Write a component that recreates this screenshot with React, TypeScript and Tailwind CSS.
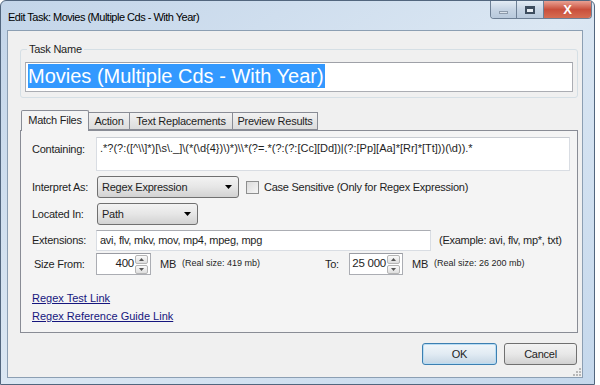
import React from "react";

// small building blocks for the win7 look
const Combo = ({ value, width }: { value: string; width: string }) => (
  <div
    className={`${width} h-[22px] flex items-center rounded-[3px] border border-[#707070] bg-gradient-to-b from-[#f3f3f3] via-[#e6e6e6] to-[#d2d2d2] pl-[4px] pr-[6px]`}
  >
    <span className="flex-1">{value}</span>
    <svg width="7" height="4" viewBox="0 0 7 4">
      <path d="M0 0h7L3.5 4z" fill="#000" />
    </svg>
  </div>
);

const Spin = ({ value, width }: { value: string; width: string }) => (
  <div
    className={`${width} h-[22px] flex items-center border border-[#abadb3] border-t-[#9a9ca3] bg-white pr-[2px]`}
  >
    <span className="flex-1 text-right pr-[1px] text-[11.5px] whitespace-nowrap">{value}</span>
    <div className="flex flex-col gap-[1px]">
      <div className="w-[13px] h-[9px] flex items-center justify-center border border-[#b5b5b5] rounded-[2px] bg-gradient-to-b from-[#fafafa] to-[#dedede]">
        <svg width="5" height="3" viewBox="0 0 5 3">
          <path d="M0 3h5L2.5 0z" fill="#555" />
        </svg>
      </div>
      <div className="w-[13px] h-[9px] flex items-center justify-center border border-[#b5b5b5] rounded-[2px] bg-gradient-to-b from-[#fafafa] to-[#dedede]">
        <svg width="5" height="3" viewBox="0 0 5 3">
          <path d="M0 0h5L2.5 3z" fill="#555" />
        </svg>
      </div>
    </div>
  </div>
);

export default function App() {
  return (
    <div className="w-[600px] h-[385px] bg-white overflow-hidden font-['Liberation_Sans',Arial,sans-serif] text-[11px] tracking-[-0.25px] text-[#1e1e1e]">
      <div className="w-[595px] h-[385px] flex flex-col rounded-t-[6px] border border-[#52667e] bg-gradient-to-br from-[#c3d5e9] via-[#dbe7f3] to-[#c5d8ec]">
        {/* title bar */}
        <div className="h-[29px] flex items-start shrink-0">
          <span className="ml-[7px] mt-[8px] text-[11px] tracking-[-0.5px] text-black">
            Edit Task: Movies (Multiple Cds - With Year)
          </span>
          <div className="ml-auto mr-[2px] flex h-[18px] rounded-b-[4px] border border-t-0 border-[#6d7f95] overflow-hidden">
            <div className="w-[26px] flex items-center justify-center border-r border-[#6d7f95] bg-gradient-to-b from-[#e3ebf4] via-[#c6d4e4] to-[#b8c9dc]">
              <div className="w-[9px] h-[3px] mt-[5px] bg-[#dbe3ec] border border-[#8d9bac]" />
            </div>
            <div className="w-[27px] flex items-center justify-center border-r border-[#6d7f95] bg-gradient-to-b from-[#e3ebf4] via-[#c6d4e4] to-[#b8c9dc]">
              <div className="w-[10px] h-[8px] border-2 border-t-[3px] border-[#3d4c5e] bg-[#e9eef4]" />
            </div>
            <div className="w-[47px] flex items-center justify-center bg-gradient-to-b from-[#e8a093] via-[#c94f3c] to-[#d66d52]">
              <span className="text-white font-bold text-[13px] leading-none">X</span>
            </div>
          </div>
        </div>

        {/* client area */}
        <div className="relative ml-[6px] w-[576px] h-[348px] shrink-0 border border-[#8c9fb3] bg-[#f0f0f0] flex flex-col">
          <fieldset className="ml-[12px] mt-[11px] w-[558px] border border-[#d5dfe5] rounded-[3px] px-[4px] pb-[5px]">
            <legend className="ml-[2px] px-[2px] leading-[14px] text-[11px]">Task Name</legend>
            <div className="mt-[6px] h-[30px] border border-[#abadb3] border-t-[#9fa1a8] bg-white p-[1px] pl-[2px]">
              <span className="inline-block h-[24px] leading-[24px] bg-[#3399ff] text-white text-[20px] tracking-normal pr-[1px]">
                Movies (Multiple Cds - With Year)
              </span>
            </div>
          </fieldset>

          {/* tabs */}
          <div className="mt-[12px] ml-[12px] w-[558px] flex flex-col">
            <div className="h-[20px] flex items-end pl-[1px] relative z-10">
              <div className="w-[68px] h-[21px] -mb-[1px] flex items-center justify-center border border-b-0 border-[#898c95] rounded-t-[2px] bg-[#f4f4f4] pb-[1px]">
                Match Files
              </div>
              <div className="w-[42px] h-[18px] -ml-[1px] flex items-center justify-center border border-[#898c95] bg-gradient-to-b from-[#f2f2f2] to-[#dcdcdc]">
                Action
              </div>
              <div className="w-[104px] h-[18px] -ml-[1px] flex items-center justify-center border border-[#898c95] bg-gradient-to-b from-[#f2f2f2] to-[#dcdcdc]">
                Text Replacements
              </div>
              <div className="w-[86px] h-[18px] -ml-[1px] flex items-center justify-center border border-[#898c95] bg-gradient-to-b from-[#f2f2f2] to-[#dcdcdc]">
                Preview Results
              </div>
            </div>
            <div className="h-[203px] border border-[#898c95] bg-[#f4f4f4] pl-[11px] pr-[7px] pt-[6px] flex flex-col">
              <div className="flex">
                <span className="w-[64px] pt-[4px]">Containing:</span>
                <div className="w-[474px] h-[34px] border border-[#d9dde3] border-t-[#c8ccd2] bg-white px-[3px] pt-[3px] leading-[14px] tracking-normal whitespace-nowrap overflow-hidden">
                  {".*?(?:([^\\\\]*)[\\s\\._]\\(*(\\d{4})\\)*)\\\\*(?=.*(?:(?:[Cc][Dd])|(?:[Pp][Aa]*[Rr]*[Tt]))(\\d)).*"}
                </div>
              </div>

              <div className="flex items-center mt-[5px]">
                <span className="w-[65px]">Interpret As:</span>
                <Combo value="Regex Expression" width="w-[142px]" />
                <div className="ml-[7px] w-[13px] h-[13px] border border-[#8e8f8f] bg-gradient-to-br from-[#dcdcdc] to-[#f6f6f6]" />
                <span className="ml-[5px]">Case Sensitive (Only for Regex Expression)</span>
              </div>

              <div className="flex items-center mt-[5px]">
                <span className="w-[65px]">Located In:</span>
                <Combo value="Path" width="w-[101px]" />
              </div>

              <div className="flex items-center mt-[5px]">
                <span className="w-[64px]">Extensions:</span>
                <div className="w-[335px] h-[21px] flex items-center border border-[#d9dde3] border-t-[#abadb3] bg-white px-[3px]">
                  avi, flv, mkv, mov, mp4, mpeg, mpg
                </div>
                <span className="ml-[8px]">(Example: avi, flv, mp*, txt)</span>
              </div>

              <div className="flex items-center mt-[2px]">
                <div className="w-[293px] flex items-center">
                  <span className="w-[64px] pl-[2px]">Size From:</span>
                  <Spin value="400" width="w-[55px]" />
                  <span className="ml-[9px]">MB</span>
                  <span className="ml-[6px] text-[9px] tracking-normal">(Real size: 419 mb)</span>
                </div>
                <span className="w-[24px]">To:</span>
                <Spin value="25 000" width="w-[54px]" />
                <span className="ml-[9px]">MB</span>
                <span className="ml-[6px] text-[9px] tracking-normal">(Real size: 26 200 mb)</span>
              </div>

              <div className="mt-[17px] flex flex-col gap-[5px] items-start tracking-normal">
                <span className="underline text-[#16167e] leading-[13px]">Regex Test Link</span>
                <span className="underline text-[#16167e] leading-[13px]">Regex Reference Guide Link</span>
              </div>
            </div>
          </div>

          {/* dialog buttons */}
          <div className="mt-[10px] mr-[5px] flex justify-end gap-[7px]">
            <div className="w-[75px] h-[22px] flex items-center justify-center rounded-[3px] border border-[#3c7fb1] bg-gradient-to-b from-[#f1f6fa] via-[#e1ebf3] to-[#c5d6e4] shadow-[inset_0_0_0_1px_#b8dcf3]">
              OK
            </div>
            <div className="w-[73px] h-[22px] flex items-center justify-center rounded-[3px] border border-[#707070] bg-gradient-to-b from-[#f3f3f3] via-[#e8e8e8] to-[#d1d1d1]">
              Cancel
            </div>
          </div>

          {/* size grip */}
          <div className="absolute right-[1px] bottom-[1px] grid grid-cols-3 gap-[1px]">
            <span className="w-[2px] h-[2px]" />
            <span className="w-[2px] h-[2px]" />
            <span className="w-[2px] h-[2px] bg-[#b8b8b8]" />
            <span className="w-[2px] h-[2px]" />
            <span className="w-[2px] h-[2px] bg-[#b8b8b8]" />
            <span className="w-[2px] h-[2px] bg-[#b8b8b8]" />
            <span className="w-[2px] h-[2px] bg-[#b8b8b8]" />
            <span className="w-[2px] h-[2px] bg-[#b8b8b8]" />
            <span className="w-[2px] h-[2px] bg-[#b8b8b8]" />
          </div>
        </div>
      </div>
    </div>
  );
}
